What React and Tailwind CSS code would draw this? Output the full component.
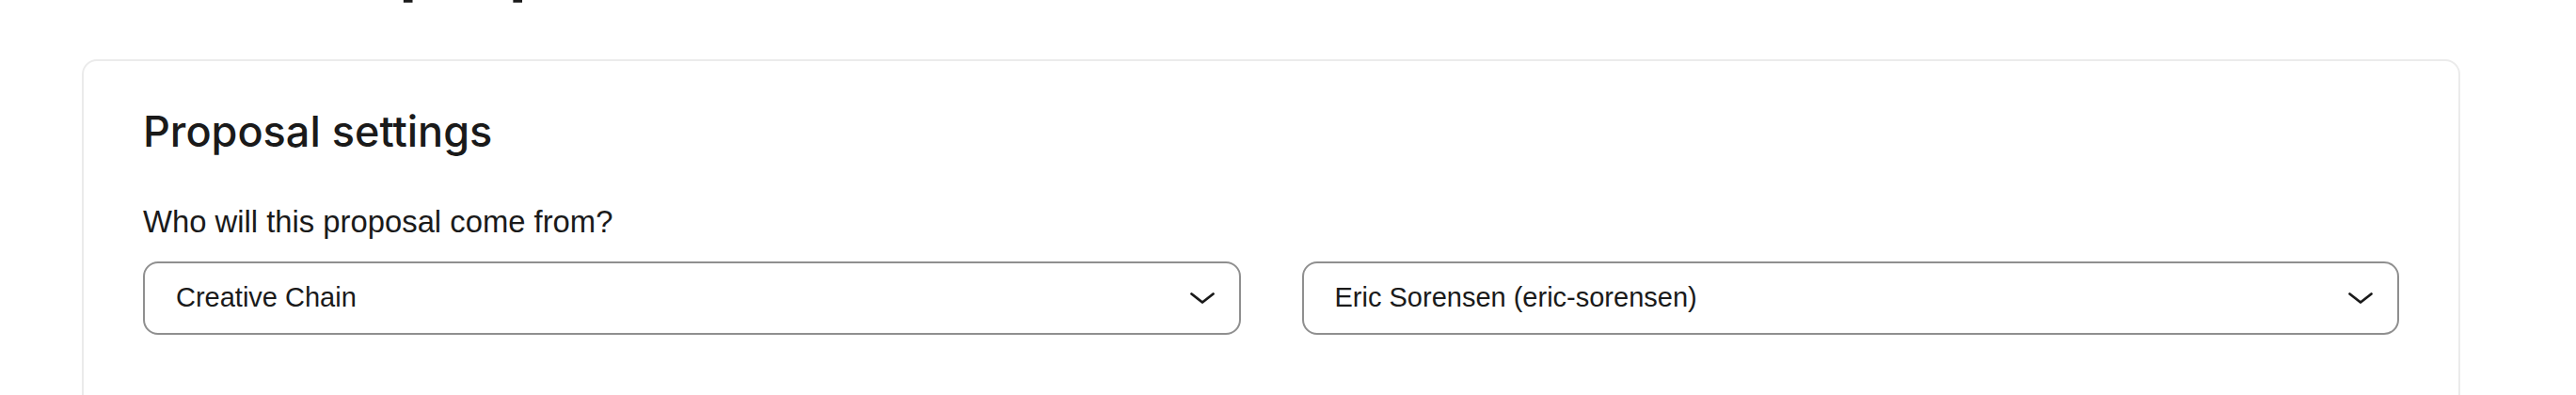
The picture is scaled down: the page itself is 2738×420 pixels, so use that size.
import React from 'react'

const ChevronDown = () => (
  <svg width="28" height="16" viewBox="0 0 28 16" fill="none" className="shrink-0">
    <polyline
      points="2.5,3.5 14,12.5 25.5,3.5"
      stroke="#1a1a1a"
      strokeWidth="2.8"
      strokeLinecap="round"
      strokeLinejoin="round"
    />
  </svg>
)

const SelectBox = ({ value }) => (
  <div className="flex h-[78px] items-center justify-between rounded-[16px] border-2 border-[#8f8f8f] bg-white pl-[33px] pr-[25px]">
    <span className="text-[29px] leading-none text-[#1a1a1a]">{value}</span>
    <ChevronDown />
  </div>
)

const App = () => {
  return (
    <div className="min-h-screen overflow-hidden bg-white font-['Liberation_Sans',Arial,sans-serif] text-[#1a1a1a]">
      <div className="pl-[87px] pr-[123px]">
        {/* Page title, scrolled mostly out of view */}
        <h1 className="-mt-[79px] pl-[27px] font-['Inter',sans-serif] text-[76px] font-semibold leading-none tracking-tight">
          Create a proposal
        </h1>

        {/* Settings card */}
        <section className="mt-[66px] rounded-2xl border-2 border-[#ebebeb] px-[63px] pt-[52px] pb-[100px]">
          <h2 className="font-['Inter',sans-serif] text-[45px] font-medium leading-none">
            Proposal settings
          </h2>

          <p className="mt-[58px] text-[32.8px] leading-none">Who will this proposal come from?</p>

          <div className="mt-[25px] grid grid-cols-2 gap-[65px]">
            <SelectBox value="Creative Chain" />
            <SelectBox value="Eric Sorensen (eric-sorensen)" />
          </div>
        </section>
      </div>
    </div>
  )
}

export default App
